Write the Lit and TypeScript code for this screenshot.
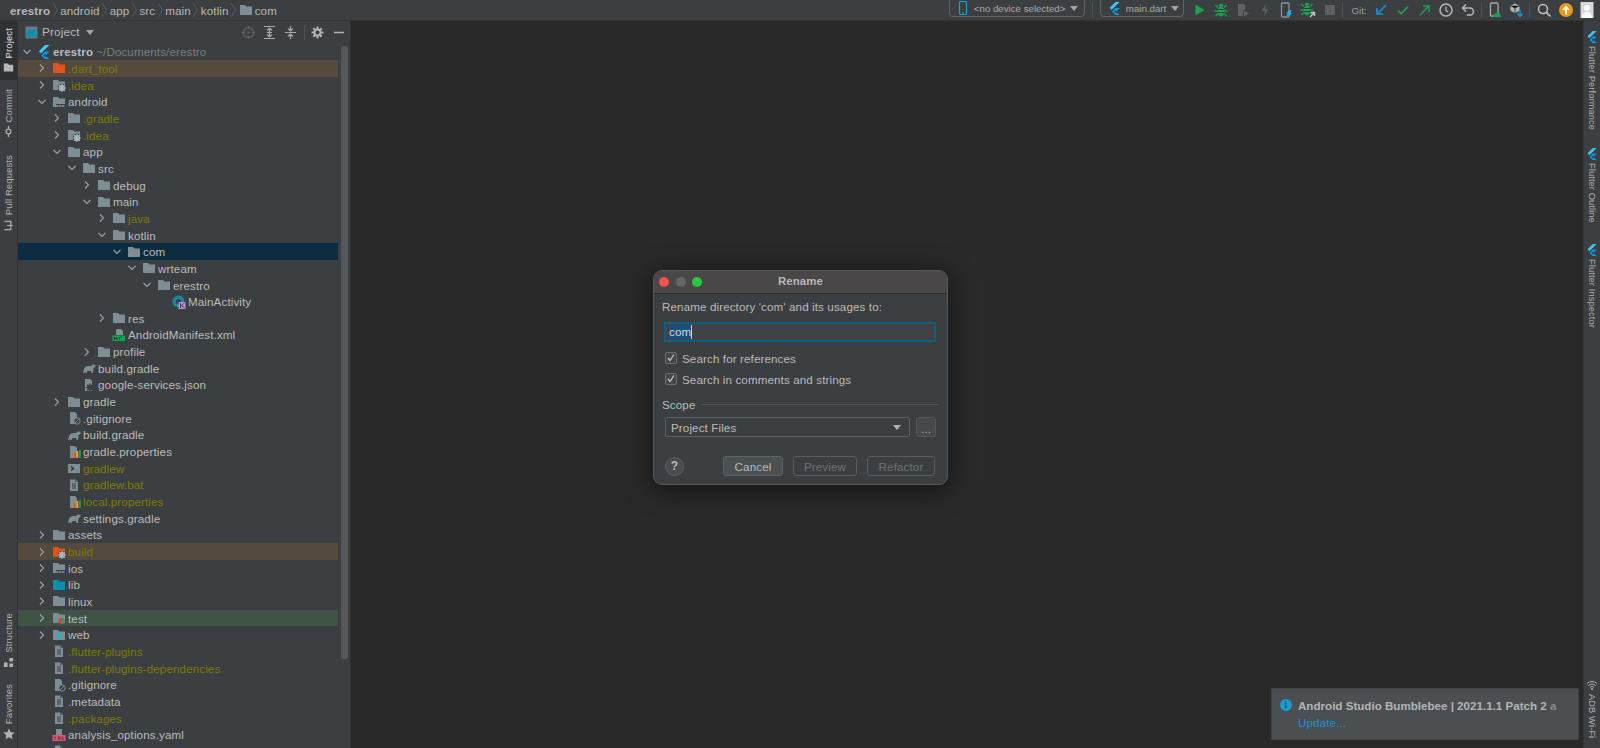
import { LitElement, html, css, svg } from "lit";
import { customElement } from "lit/decorators.js";

const G = "#7f8e95";
const flutter = (s = 14) => html`<svg width=${s} height=${s} viewBox="0 0 14 14"><path d="M8 0h4.5L4 8.4 1.8 6.2z" fill="#3fc6f5"/><path d="M8 6.5h4.5L8.3 10.8l4.2 3.2H8L4.4 10.6z" fill="#0fa0e0"/><path d="M6.2 10.5l2.2-2.2 2 2.4-2.2 1.6z" fill="#075b9a"/></svg>`;
const gear = (x: number, y: number, c = "#a9b6bc") => svg`<circle cx=${x} cy=${y} r="2.3" fill="none" stroke=${c} stroke-width="1.5"/><path d="M${x} ${y - 4}v8M${x - 4} ${y}h8M${x - 2.8} ${y - 2.8}l5.6 5.6M${x - 2.8} ${y + 2.8}l5.6-5.6" stroke=${c} stroke-width="1.2"/>`;
const FOLDER = "M1 2h5l1.4 1.6H13V12H1z";

function icon(n: string) {
  const wrap = (c: unknown) => html`<svg width="14" height="14" viewBox="0 0 14 14">${c}</svg>`;
  const page = svg`<path d="M3 1.5h5.5L11 4v9H3z" fill=${G}/><path d="M5 6h4M5 8h4M5 10h4" stroke="#3c3f41" stroke-width="1"/><path d="M8 1.5V4h3" fill="#3c3f41" opacity=".6"/>`;
  const props = svg`<path d="M3 1h5l2 2v10H3z" fill=${G}/><rect x="7" y="8" width="2" height="5" fill="#e8542a"/><rect x="9.5" y="6" width="1.8" height="7" fill="#e8a52a"/><rect x="12" y="5" width="1.8" height="8" fill="#1fa24a"/>`;
  const ignore = svg`<path d="M3 1h5l2 2v10H3z" fill=${G}/><circle cx="10" cy="10" r="3.2" fill="#3c3f41" stroke=${G} stroke-width="1"/><path d="M8 12l4-4" stroke=${G} stroke-width="1"/>`;
  const elephant = svg`<path d="M1 12l1-4c.6-2 2.4-3 4.5-3h3c.5-1.6 3-2 4-.4.4.7 0 1.6-.6 1.8-.5.2-1 0-1.2.4L11 12H9.4l-.4-2H5.4L4.6 12H3.3l-.2-1.6L2.3 12z" fill=${G}/>`;
  switch (n) {
    case "flutter": return flutter(14);
    case "folder": return wrap(svg`<path d=${FOLDER} fill=${G}/>`);
    case "orange": return wrap(svg`<path d=${FOLDER} fill="#e2531f"/>`);
    case "teal": return wrap(svg`<path d=${FOLDER} fill="#0c8fa8"/>`);
    case "build": return wrap(svg`<path d=${FOLDER} fill="#e2531f"/><circle cx="10" cy="10" r="4" fill="#3c3f41"/>${gear(10, 10)}`);
    case "gear": return wrap(svg`<path d=${FOLDER} fill=${G}/><circle cx="10" cy="10" r="4.2" fill="#3c3f41"/>${gear(10, 10)}`);
    case "android": return wrap(svg`<path d=${FOLDER} fill=${G}/><rect x="4" y="9" width="10" height="4" fill="#3c3f41"/><rect x="4" y="10" width="2.5" height="2" fill="#3aa75a"/><rect x="7" y="10" width="2.5" height="2" fill="#d9534f"/><rect x="10" y="10" width="2.5" height="2" fill="#3b8fd0"/>`);
    case "test": return wrap(svg`<path d=${FOLDER} fill=${G}/><circle cx="9.5" cy="10" r="3" fill="#e03b3b"/><path d="M9.5 7a3 3 0 0 1 0 6z" fill="#22a556"/>`);
    case "web": return wrap(svg`<path d=${FOLDER} fill=${G}/><circle cx="7" cy="8" r="2.4" fill="#18b4dc"/>`);
    case "file": return wrap(page);
    case "ignore": return wrap(ignore);
    case "props": return wrap(props);
    case "gradle": return wrap(elephant);
    case "json": return wrap(svg`<path d="M3 1h5l2 2v10H3z" fill=${G}/>${gear(8, 9.5, "#3c3f41")}`);
    case "term": return wrap(svg`<rect x="1" y="3" width="12" height="9" fill=${G}/><path d="M4 5.5l2.5 2L4 9.5" fill="none" stroke="#2b2b2b" stroke-width="1.3"/>`);
    case "kotlin": return wrap(svg`<circle cx="6.5" cy="6.5" r="6" fill="#1488a8"/><circle cx="6.5" cy="6.5" r="2.6" fill="#3c3f41"/><rect x="6.5" y="7" width="7" height="7" fill="#c58be8"/><path d="M8.5 8v5M12.5 8l-3 2.5 3 2.5" stroke="#3c3f41" stroke-width="1" fill="none"/>`);
    case "manifest": return wrap(svg`<path d="M5 1h4l2 2v4H4V2z" fill=${G}/><rect x="0.5" y="7.5" width="12.5" height="5.5" fill="#15a158"/><path d="M2.5 9v3M2.5 10.5h2.5M5 9v3M7.5 12V9h2.4" stroke="#0b3b24" stroke-width=".9" fill="none"/>`);
    case "yaml": return wrap(svg`<path d="M4 1h6v6H4z" fill=${G}/><rect x="0.5" y="7" width="13" height="6" fill="#d75b78"/><path d="M2 8.5l1 1.4 1-1.4M3 10v2M6 12l.8-3.4.8 3.4M9 8.5V12M10.8 8.5V12h1.6" stroke="#5b1f2f" stroke-width=".7" fill="none"/>`);
  }
  return wrap(svg``);
}

type R = [number, string, string, string?, boolean?, string?];
// level, icon, name, colour class, chevron (true open, false closed, undefined none), row background
const rows: R[] = [
  [1, "orange", ".dart_tool", "ign", false, "warn"],
  [1, "gear", ".idea", "ign", false],
  [1, "android", "android", "", true],
  [2, "folder", ".gradle", "ign", false],
  [2, "gear", ".idea", "ign", false],
  [2, "folder", "app", "", true],
  [3, "folder", "src", "", true],
  [4, "folder", "debug", "", false],
  [4, "folder", "main", "", true],
  [5, "folder", "java", "ign", false],
  [5, "folder", "kotlin", "", true],
  [6, "folder", "com", "", true, "sel"],
  [7, "folder", "wrteam", "", true],
  [8, "folder", "erestro", "", true],
  [9, "kotlin", "MainActivity", ""],
  [5, "folder", "res", "", false],
  [5, "manifest", "AndroidManifest.xml", ""],
  [4, "folder", "profile", "", false],
  [3, "gradle", "build.gradle", ""],
  [3, "json", "google-services.json", ""],
  [2, "folder", "gradle", "", false],
  [2, "ignore", ".gitignore", ""],
  [2, "gradle", "build.gradle", ""],
  [2, "props", "gradle.properties", ""],
  [2, "term", "gradlew", "ign"],
  [2, "file", "gradlew.bat", "ign"],
  [2, "props", "local.properties", "ign"],
  [2, "gradle", "settings.gradle", ""],
  [1, "folder", "assets", "", false],
  [1, "build", "build", "ign", false, "warn"],
  [1, "android", "ios", "", false],
  [1, "teal", "lib", "", false],
  [1, "folder", "linux", "", false],
  [1, "test", "test", "", false, "ok"],
  [1, "web", "web", "", false],
  [1, "file", ".flutter-plugins", "ign"],
  [1, "file", ".flutter-plugins-dependencies", "ign"],
  [1, "ignore", ".gitignore", ""],
  [1, "file", ".metadata", ""],
  [1, "file", ".packages", "ign"],
  [1, "yaml", "analysis_options.yaml", ""],
  [1, "file", "", ""],
];

const chev = (open?: boolean) =>
  open === undefined
    ? html`<span class="chev"></span>`
    : html`<span class="chev"><svg width="10" height="10" viewBox="0 0 10 10"><path d=${open ? "M1.5 3l3.5 3.5L8.5 3" : "M3 1.5L6.5 5 3 8.5"} fill="none" stroke="#9da3a6" stroke-width="1.1"/></svg></span>`;

const tb = (c: unknown) => html`<span class="cell"><svg width="16" height="16" viewBox="0 0 16 16">${c}</svg></span>`;
const crumbSep = html`<svg class="crumb-sep" width="7" height="16" viewBox="0 0 7 16"><path d="M1 1l4.5 7L1 15" fill="none" stroke="#55595b"/></svg>`;
const bug = (c: string) => svg`<ellipse cx="8" cy="9.5" rx="3.6" ry="5" fill=${c}/><path d="M5.5 4.2a2.5 2.5 0 0 1 5 0z" fill=${c}/><path d="M2.5 3L5 5.5M13.500 3L11 5.500M1.500 9h3M14.500 9h-3M2.500 14l2.500-2.500M13.500 14L11 11.500" stroke=${c} stroke-width="1.300" fill="none"/><path d="M4.500 7.500h7M4.500 10.500h7" stroke="#3c3f41"/>`;
const check = html`<span class="box"><svg width="10" height="10" viewBox="0 0 10 10"><path d="M2 5l2 2.500L8 1.500" fill="none" stroke="#c4c6c8" stroke-width="1.300"/></svg></span>`;

@customElement("app-root")
export class AppRoot extends LitElement {
  static styles = css`
    :host { display: block; width: 1600px; height: 748px; overflow: hidden; background: #292929; color: #bbb;
      font-family: "Liberation Sans", Arial, sans-serif; font-size: 11.6px; letter-spacing: .12px; }
    svg { display: block; flex: none; }
    .top { height: 21px; background: #3c3f41; border-bottom: 1px solid #323537; box-sizing: border-box; display: flex; align-items: center; justify-content: space-between; }
    .crumbs { display: flex; align-items: center; padding-left: 10px; color: #b4b7b9; }
    .crumbs b { color: #b4b7b9; }
    .crumb-sep { margin: 0 1.5px; }
    .crumb-folder { margin-right: 2px; }
    .tools { display: flex; align-items: center; height: 20px; padding-right: 2px; }
    .cell { width: 21.67px; display: flex; justify-content: center; align-items: center; height: 18px; }
    .combo { box-sizing: border-box; align-self: flex-start; margin-top: -4px; height: 21px; border: 1px solid #5f6365; border-radius: 4px; display: flex; align-items: center; gap: 5px; padding: 3px 7px 0; color: #a8abad; font-size: 9.7px; letter-spacing: 0; white-space: nowrap; }
    .dev { width: 136px; }
    .main-c { width: 84px; margin-right: 5px; }
    .caret { width: 0; height: 0; border: 4px solid transparent; border-top: 5px solid #a3a6a8; border-bottom: 0; margin-left: auto; }
    .tsep { width: 1px; height: 15px; background: #4f5355; margin: 0 3px 0 2px; }
    .tsep1 { margin: 0 7px; }
    .tsep2 { margin: 0 2px 0 2px; }
    .git { width: 27px; color: #9a9d9f; font-size: 9.7px; letter-spacing: 0; padding-left: 8px; box-sizing: border-box; margin-left: -3px; }
    .body { display: flex; height: 727px; }
    .strip { width: 17px; flex: none; background: #3c3f41; display: flex; flex-direction: column; align-items: center; box-sizing: border-box; font-size: 9.5px; color: #b0b3b5; }
    .strip.left { border-right: 1px solid #313335; width: 18px; }
    .tab { display: flex; flex-direction: column; align-items: center; gap: 4px; width: 100%; }
    .tab span { writing-mode: vertical-rl; transform: rotate(180deg); white-space: nowrap; }
    .tab.active { background: #2e3133; color: #e4e4e4; height: 59px; padding-top: 7px; box-sizing: border-box; margin-bottom: 9px; }
    .tab.pr { margin-top: 18px; }
    .push { margin-top: auto; }
    .tab.fav { margin-top: 16px; margin-bottom: 8px; }
    .panel { width: 332px; flex: none; background: #3c3f41; border-right: 1px solid #2f3133; position: relative; overflow: hidden; }
    .phead { height: 22.5px; display: flex; align-items: center; padding-left: 7px; }
    .phead .title { font-size: 11.8px; margin: 0 6px 0 4px; color: #b4b7b9; letter-spacing: .15px; }
    .phead .caret { margin-left: 0; }
    .pactions { margin-left: auto; display: flex; align-items: center; gap: 6px; padding-right: 3px; }
    .pactions i { width: 1px; height: 15px; background: #4f5355; margin: 0 -1px 0 0; }
    .minus { margin-left: 1px; }
    .row { height: 16.66px; width: 320px; display: flex; align-items: center; box-sizing: border-box; white-space: nowrap; }
    .row.warn { background: #544b3e; }
    .row.ok { background: #3f5244; }
    .row.sel { background: #0c2c42; }
    .chev { width: 14px; flex: none; }
    .chev svg { margin-left: -1px; }
    .ico { width: 14px; flex: none; margin-right: 2px; }
    .ign { color: #7c7c00; }
    .path { color: #7b7e80; margin-left: 3px; }
    .root b { color: #bbb; }
    .thumb { position: absolute; left: 323px; top: 25px; width: 6.5px; height: 613px; background: #55585a; border-radius: 3px; }
    .editor { flex: 1; position: relative; background: #292929; }
    .strip.right { border-left: 1px solid #323537; font-size: 9.3px; }
    .rt { display: flex; flex-direction: column; align-items: center; gap: 3px; }
    .rt span { writing-mode: vertical-rl; white-space: nowrap; letter-spacing: .1px; }
    .r1 { margin-top: 10px; }
    .r2 { margin-top: 18px; }
    .r3 { margin-top: 21px; }
    .r4 { margin-bottom: 10px; margin-top: auto; }
    .dialog { position: absolute; left: 302px; top: 249px; width: 295px; height: 215px; box-sizing: border-box; background: #3c3f41; border: 1px solid #57595b; border-radius: 9px; box-shadow: 0 4px 26px rgba(0,0,0,.55); overflow: hidden; display: flex; flex-direction: column; }
    .dtitle { height: 23px; padding-bottom: 2px; box-sizing: border-box; flex: none; background: #4a4749; border-bottom: 1px solid #2f2f30; display: flex; align-items: center; justify-content: center; font-weight: 700; color: #b8b8b8; position: relative; font-size: 11.4px; }
    .lights { position: absolute; left: 5px; top: 6px; display: flex; gap: 6.6px; }
    .lights i { width: 10px; height: 10px; border-radius: 50%; }
    .red { background: #f0544f; } .grey { background: #636567; } .green { background: #2ac840; }
    .dbody { padding: 6px 8px 0; display: flex; flex-direction: column; flex: 1; }
    .dlabel { line-height: 14px; }
    .input { margin: 8px 2px 0; height: 20px; box-sizing: border-box; border: 2px solid #0f5f84; background: #3f4345; display: flex; align-items: center; padding-left: 3px; color: #bbb; width: 272px; }
    .input em { font-style: normal; background: #1b4f80; color: #cfd6dc; border-right: 1px solid #d0d0d0; line-height: 14px; }
    .check { display: flex; align-items: center; gap: 5px; margin: 0 3px; height: 14px; }
    .check.a { margin-top: 9px; }
    .check.b { margin-top: 7px; }
    .box { width: 12px; height: 12px; box-sizing: border-box; border: 1px solid #6b6e70; border-radius: 2px; background: #43474a; }
    .scope { display: flex; align-items: center; gap: 6px; margin-top: 11px; height: 14px; }
    .scope i { flex: 1; height: 1px; background: #4f5254; }
    .srow { display: flex; gap: 6px; margin: 6px 2px 0 3px; }
    .select { width: 245px; height: 20px; box-sizing: border-box; border: 1px solid #5e6163; border-radius: 2px; display: flex; align-items: center; padding: 0 8px 0 5px; background: #3c3f41; }
    .select .caret { border-top-color: #b0b0b0; }
    .more { width: 20px; height: 20px; box-sizing: border-box; border: 1px solid #54585a; border-radius: 3px; background: #45494b; display: flex; align-items: flex-end; justify-content: center; line-height: 14px; color: #aaa; }
    .btns { display: flex; align-items: center; margin: 19px 1px 0 3px; }
    .help { width: 19px; height: 19px; box-sizing: border-box; border: 1px solid #5e6163; border-radius: 50%; background: #484c4e; display: flex; align-items: center; justify-content: center; font-weight: 700; font-size: 12px; color: #bbb; margin-right: 39px; }
    .btn { height: 20px; box-sizing: border-box; border: 1px solid #5a5d5f; border-radius: 3px; display: flex; align-items: center; justify-content: center; color: #6f7274; margin-right: 10px; }
    .btn.c { width: 60px; background: #4b5052; color: #bbb; border-color: #606365; }
    .btn.p { width: 64px; }
    .btn.r { width: 68px; margin-right: 0; }
    .toast { position: absolute; left: 920px; top: 667px; width: 308px; height: 52px; box-sizing: border-box; background: #4b4f52; border: 1px solid #404345; padding: 8px 8px 0 8px; overflow: hidden; }
    .toast .t1 { display: flex; align-items: center; gap: 6px; font-weight: 700; color: #b3b5b7; white-space: nowrap; height: 16px; letter-spacing: 0; }
    .info { width: 12px; height: 12px; border-radius: 50%; background: #189cd8; color: #4b4f52; font: 700 10px/12px "Liberation Serif", serif; text-align: center; flex: none; }
    .t1 u { text-decoration: none; opacity: .6; }
    .toast a { display: block; color: #1b8fdc; margin: 2px 0 0 18px; line-height: 16px; }
  `;

  render() {
    return html`
      <div class="top">
        <div class="crumbs">
          <b>erestro</b>${crumbSep}<span>android</span>${crumbSep}<span>app</span>${crumbSep}<span>src</span>${crumbSep}<span>main</span>${crumbSep}<span>kotlin</span>${crumbSep}
          <svg class="crumb-folder" width="14" height="14" viewBox="0 0 14 14"><path d=${FOLDER} fill=${G}/></svg><span>com</span>
        </div>
        <div class="tools">
          <div class="combo dev">
            <svg width="12" height="14" viewBox="0 0 12 14"><rect x="2.5" y=".5" width="7" height="13" rx="1.3" fill="none" stroke="#1b9bdc" stroke-width="1.2"/><path d="M5 12h2" stroke="#1b9bdc"/></svg>
            <span>&lt;no device selected&gt;</span><span class="caret"></span>
          </div>
          <span class="tsep tsep1"></span>
          <div class="combo main-c">${flutter(13)}<span>main.dart</span><span class="caret"></span></div>
          ${tb(svg`<path d="M3.5 2.5L12.5 8l-9 5.5z" fill="#1fa04e"/>`)}
          ${tb(bug("#1fa04e"))}
          ${tb(svg`<path d="M3 2h5.5l2 2v3L8 9v5H3z" fill="#5f6365"/><path d="M9 8.5l5 3-5 3z" fill="#5f6365"/>`)}
          ${tb(svg`<path d="M9 1.5L4.5 9H8l-1 5.5L11.5 7H8z" fill="#5c6062"/>`)}
          ${tb(svg`<rect x="3.5" y="1" width="7.5" height="14" rx="1" fill="none" stroke="#8d9194" stroke-width="1.3"/><path d="M11.5 8l-3 3 1 1-1 2h3l2.5-2.5-1.5-1 1.5-2.5z" fill="#25a8e8"/>`)}
          ${tb(svg`<g transform="translate(-1,-1)">${bug("#1fa04e")}</g><path d="M10 15l4-4M11 10.500h3.500V14" stroke="#c8cacb" stroke-width="1.300" fill="none"/>`)}
          ${tb(svg`<rect x="3" y="3" width="10" height="10" fill="#5c6062"/>`)}
          <span class="tsep"></span>
          <span class="git">Git:</span>
          ${tb(svg`<path d="M13 3L4.5 11.5M4 6v6h6" stroke="#1a90d0" stroke-width="1.7" fill="none"/>`)}
          ${tb(svg`<path d="M3 8.5l3.3 3.3L13 4.5" stroke="#1fa04e" stroke-width="1.7" fill="none"/>`)}
          ${tb(svg`<path d="M3 13l8.5-8.5M6 4h6v6" stroke="#1fa04e" stroke-width="1.5" fill="none"/>`)}
          ${tb(svg`<circle cx="8" cy="8" r="6" fill="none" stroke="#b6b8ba" stroke-width="1.5"/><path d="M8 4.5V8.5l2.3 1.5" fill="none" stroke="#b6b8ba" stroke-width="1.3"/>`)}
          ${tb(svg`<path d="M3 6h7a3.5 3.5 0 0 1 0 7H7M6 2.5L2.5 6 6 9.5" fill="none" stroke="#b6b8ba" stroke-width="1.5"/>`)}
          <span class="tsep tsep2"></span>
          ${tb(svg`<rect x="3.5" y="1" width="7.5" height="13" rx="1" fill="none" stroke="#a8abad" stroke-width="1.3"/><path d="M6 15a4 4 0 0 1 8 0z" fill="#1fa04e"/>`)}
          ${tb(svg`<path d="M7 1.5l4.5 2.2v5L7 11 2.5 8.7v-5z" fill="#b4b7b9"/><path d="M2.5 3.7L7 6l4.5-2.3M7 6v5" stroke="#3c3f41"/><path d="M12 7.5V14M9.5 11.5L12 14.5l2.5-3" fill="none" stroke="#1a90d0" stroke-width="1.5"/>`)}
          <span class="tsep"></span>
          ${tb(svg`<circle cx="7" cy="7" r="4.5" fill="none" stroke="#c2c4c6" stroke-width="1.5"/><path d="M10.3 10.3L14.5 14.5" stroke="#c2c4c6" stroke-width="1.7"/>`)}
          ${tb(svg`<circle cx="8" cy="8" r="7" fill="#ef9617"/><path d="M8 12.5V5.5M5 8l3-3.2L11 8" fill="none" stroke="#fff" stroke-width="1.8"/>`)}
          ${tb(svg`<rect x="1.5" y="0" width="13" height="16" fill="#d6d8da"/><circle cx="8" cy="6" r="3" fill="#fafafa"/><path d="M3 16c0-4 2-6 5-6s5 2 5 6z" fill="#fafafa"/>`)}
        </div>
      </div>
      <div class="body">
        <div class="strip left">
          <div class="tab active"><span>Project</span>
            <svg width="11" height="11" viewBox="0 0 14 14"><path d=${FOLDER} fill="#b5b8ba"/></svg></div>
          <div class="tab"><span>Commit</span>
            <svg width="11" height="11" viewBox="0 0 12 12"><circle cx="6" cy="6" r="2.6" fill="none" stroke="#b0b3b5" stroke-width="1.4"/><path d="M6 0v3M6 9v3" stroke="#b0b3b5" stroke-width="1.4"/></svg></div>
          <div class="tab pr"><span>Pull Requests</span>
            <svg width="11" height="11" viewBox="0 0 12 12"><path d="M1.500 1.500h7v2.500M1.500 10.500h7V8M4.500 6h6M8.500 1.500v9" fill="none" stroke="#b0b3b5" stroke-width="1.300"/></svg></div>
          <div class="tab push"><span>Structure</span>
            <svg width="11" height="11" viewBox="0 0 12 12"><path d="M1 6h4v5H1zM7 1h4v4H7zM7 7h4v4H7z" fill="#b0b3b5"/></svg></div>
          <div class="tab fav"><span>Favorites</span>
            <svg width="12" height="12" viewBox="0 0 12 12"><path d="M6 .5l1.7 3.7 4 .4-3 2.7.9 4L6 9.200 2.400 11.300l.9-4-3-2.700 4-.4z" fill="#b0b3b5"/></svg></div>
        </div>
        <div class="panel">
          <div class="phead">
            <svg width="13" height="13" viewBox="0 0 13 13"><rect x=".5" y=".5" width="12" height="12" fill="#6d7a80"/><rect x="1.500" y="3.500" width="10" height="7.500" fill="#0f8fb0"/></svg>
            <span class="title">Project</span><span class="caret"></span>
            <div class="pactions">
              <svg width="15" height="15" viewBox="0 0 15 15"><circle cx="7.5" cy="7.5" r="5" fill="none" stroke="#5e6264" stroke-width="1.4"/><circle cx="7.500" cy="7.500" r="1.300" fill="#5e6264"/><path d="M7.500 1v3M7.500 11v3M1 7.500h3M11 7.500h3" stroke="#5e6264"/></svg>
              <svg width="15" height="15" viewBox="0 0 15 15"><path d="M2 1.500h11M2 13.500h11M7.500 3v9M5 5.500L7.500 3 10 5.500M5 9.500L7.500 12 10 9.500M5 7.500h5" fill="none" stroke="#a9acae" stroke-width="1.200"/></svg>
              <svg width="15" height="15" viewBox="0 0 15 15"><path d="M2 7.500h11M7.500 1v4.500M5 3.500L7.500 6 10 3.500M7.500 14V9.500M5 11.500L7.500 9 10 11.500" fill="none" stroke="#a9acae" stroke-width="1.200"/></svg>
              <i></i>
              <svg width="15" height="15" viewBox="0 0 15 15"><circle cx="7.500" cy="7.500" r="3" fill="none" stroke="#b0b3b5" stroke-width="2"/><path d="M7.500 1.500v3M7.500 10.500v3M1.500 7.500h3M10.500 7.500h3M3.300 3.300l2 2M9.700 9.700l2 2M3.300 11.700l2-2M9.700 5.300l2-2" stroke="#b0b3b5" stroke-width="2"/></svg>
              <svg class="minus" width="15" height="15" viewBox="0 0 15 15"><path d="M2 7.500h10" stroke="#b0b3b5" stroke-width="1.500"/></svg>
            </div>
          </div>
          <div class="row root" style="padding-left:5px">
            ${chev(true)}<span class="ico">${flutter(14)}</span><b>erestro</b><span class="path">~/Documents/erestro</span>
          </div>
          ${rows.map(([l, ic, name, cls, open, bg]) => html`
            <div class="row ${bg ?? ""}" style="padding-left:${5 + 15 * l}px">
              ${chev(open)}<span class="ico">${icon(ic)}</span><span class=${cls ?? ""}>${name}</span>
            </div>`)}
          <div class="thumb"></div>
        </div>
        <div class="editor">
          <div class="dialog">
            <div class="dtitle">
              <div class="lights"><i class="red"></i><i class="grey"></i><i class="green"></i></div>
              Rename
            </div>
            <div class="dbody">
              <div class="dlabel">Rename directory 'com' and its usages to:</div>
              <div class="input"><em>com</em></div>
              <div class="check a">${check}Search for references</div>
              <div class="check b">${check}Search in comments and strings</div>
              <div class="scope">Scope<i></i></div>
              <div class="srow">
                <div class="select">Project Files<span class="caret"></span></div>
                <div class="more">...</div>
              </div>
              <div class="btns">
                <span class="help">?</span>
                <span class="btn c">Cancel</span>
                <span class="btn p">Preview</span>
                <span class="btn r">Refactor</span>
              </div>
            </div>
          </div>
          <div class="toast">
            <div class="t1"><span class="info">i</span><span>Android Studio Bumblebee | 2021.1.1 Patch 2 <u>a</u></span></div>
            <a>Update...</a>
          </div>
        </div>
        <div class="strip right">
          <div class="rt r1">${flutter(12)}<span>Flutter Performance</span></div>
          <div class="rt r2">${flutter(12)}<span>Flutter Outline</span></div>
          <div class="rt r3">${flutter(12)}<span>Flutter Inspector</span></div>
          <div class="rt r4">
            <svg width="12" height="12" viewBox="0 0 12 12"><path d="M1 4.500a7 7 0 0 1 10 0M2.500 6.500a5 5 0 0 1 7 0M4 8.500a2.500 2.500 0 0 1 4 0" fill="none" stroke="#b0b3b5"/><circle cx="6" cy="10" r="1" fill="#b0b3b5"/></svg>
            <span>ADB Wi-Fi</span>
          </div>
        </div>
      </div>
    `;
  }
}
